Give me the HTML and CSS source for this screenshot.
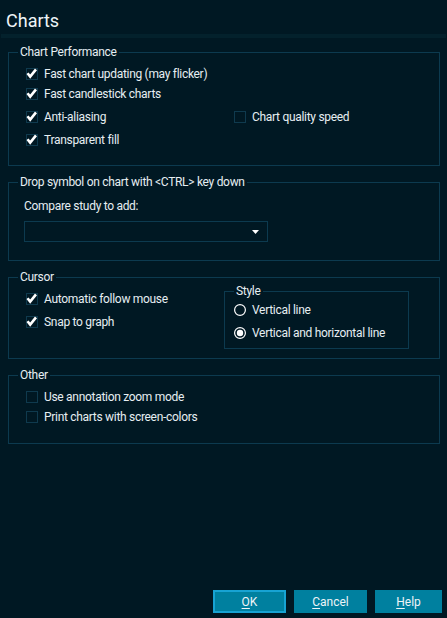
FILE: index.html
```html
<!DOCTYPE html>
<html>
<head>
<meta charset="utf-8">
<link rel="stylesheet" href="styles.css">
</head>
<body>
<div class="dialog">
  <header class="title">Charts</header>
  <div class="divider"></div>
  <main class="content">
    <fieldset class="group">
      <legend>Chart Performance</legend>
      <div class="perf-grid">
        <label class="opt span2"><svg class="box" viewBox="0 0 12 12"><rect x="0.5" y="0.5" width="11" height="11" fill="none" stroke="#0f3a4e"/><path d="M1.5 5.2 L4.2 8.6 L10 1.4" fill="none" stroke="#fff" stroke-width="2.6"/></svg>Fast chart updating (may flicker)</label>
        <label class="opt span2"><svg class="box" viewBox="0 0 12 12"><rect x="0.5" y="0.5" width="11" height="11" fill="none" stroke="#0f3a4e"/><path d="M1.5 5.2 L4.2 8.6 L10 1.4" fill="none" stroke="#fff" stroke-width="2.6"/></svg>Fast candlestick charts</label>
        <label class="opt"><svg class="box" viewBox="0 0 12 12"><rect x="0.5" y="0.5" width="11" height="11" fill="none" stroke="#0f3a4e"/><path d="M1.5 5.2 L4.2 8.6 L10 1.4" fill="none" stroke="#fff" stroke-width="2.6"/></svg>Anti-aliasing</label>
        <label class="opt"><svg class="box" viewBox="0 0 12 12"><rect x="0.5" y="0.5" width="11" height="11" fill="none" stroke="#0f3a4e"/></svg>Chart quality speed</label>
        <label class="opt span2"><svg class="box" viewBox="0 0 12 12"><rect x="0.5" y="0.5" width="11" height="11" fill="none" stroke="#0f3a4e"/><path d="M1.5 5.2 L4.2 8.6 L10 1.4" fill="none" stroke="#fff" stroke-width="2.6"/></svg>Transparent fill</label>
      </div>
    </fieldset>

    <fieldset class="group">
      <legend>Drop symbol on chart with &lt;CTRL&gt; key down</legend>
      <div class="drop-body">
        <div class="field-label">Compare study to add:</div>
        <div class="select"><svg class="arrow" viewBox="0 0 7 4"><path d="M0 0 H7 L3.5 4 Z" fill="#fff"/></svg></div>
      </div>
    </fieldset>

    <fieldset class="group">
      <legend>Cursor</legend>
      <div class="cursor-body">
        <div class="cursor-col">
          <label class="opt"><svg class="box" viewBox="0 0 12 12"><rect x="0.5" y="0.5" width="11" height="11" fill="none" stroke="#0f3a4e"/><path d="M1.5 5.2 L4.2 8.6 L10 1.4" fill="none" stroke="#fff" stroke-width="2.6"/></svg>Automatic follow mouse</label>
          <label class="opt gap"><svg class="box" viewBox="0 0 12 12"><rect x="0.5" y="0.5" width="11" height="11" fill="none" stroke="#0f3a4e"/><path d="M1.5 5.2 L4.2 8.6 L10 1.4" fill="none" stroke="#fff" stroke-width="2.6"/></svg>Snap to graph</label>
        </div>
        <fieldset class="group style-group">
          <legend>Style</legend>
          <div class="style-body">
            <label class="opt radio"><svg class="box" viewBox="0 0 12 12"><circle cx="6" cy="6" r="5.4" fill="none" stroke="#fff" stroke-width="1.2"/></svg>Vertical line</label>
            <label class="opt radio gap"><svg class="box" viewBox="0 0 12 12"><circle cx="6" cy="6" r="5.4" fill="none" stroke="#fff" stroke-width="1.2"/><circle cx="6" cy="6" r="3.2" fill="#fff"/></svg>Vertical and horizontal line</label>
          </div>
        </fieldset>
      </div>
    </fieldset>

    <fieldset class="group">
      <legend>Other</legend>
      <div class="other-body">
        <label class="opt"><svg class="box" viewBox="0 0 12 12"><rect x="0.5" y="0.5" width="11" height="11" fill="none" stroke="#0f3a4e"/></svg>Use annotation zoom mode</label>
        <label class="opt"><svg class="box" viewBox="0 0 12 12"><rect x="0.5" y="0.5" width="11" height="11" fill="none" stroke="#0f3a4e"/></svg>Print charts with screen-colors</label>
      </div>
    </fieldset>
  </main>
  <footer class="buttons">
    <button class="btn default"><u>O</u>K</button>
    <button class="btn"><u>C</u>ancel</button>
    <button class="btn help"><u>H</u>elp</button>
  </footer>
</div>
</body>
</html>
```

FILE: styles.css
```css
html, body {
  margin: 0;
  padding: 0;
  background: #001823;
}
body {
  font-family: Roboto, "Liberation Sans", sans-serif;
  font-size: 12px;
  letter-spacing: -0.3px;
  color: #e6eef2;
}
.dialog {
  height: 618px;
  display: flex;
  flex-direction: column;
}
.title {
  font-size: 18px;
  line-height: 21px;
  letter-spacing: 0;
  padding: 10px 6px 3px;
  color: #eef4f7;
}
.divider {
  height: 4px;
  margin: 0 1px;
  background: #03212c;
}
.content {
  padding: 0 7px 0 8px;
}
.group {
  margin: 9px 0 0;
  padding: 0;
  border: 1px solid #0c3a4f;
  min-width: 0;
}
.group:first-child {
  margin-top: 7px;
}
.group legend {
  margin-left: 9px;
  padding: 0 2px;
  line-height: 14px;
  height: 14px;
}
.opt {
  display: flex;
  align-items: center;
  height: 20px;
  line-height: 14px;
  white-space: nowrap;
}
.box {
  width: 12px;
  height: 12px;
  flex: none;
  margin-right: 6px;
}
.perf-grid {
  display: grid;
  grid-template-columns: 208px 1fr;
  grid-template-rows: 20px 20px 23px 23px;
  align-items: end;
  padding: 5px 0 15px 17px;
}
.span2 {
  grid-column: 1 / 3;
}
.drop-body {
  padding: 10px 0 18px 15px;
}
.field-label {
  line-height: 14px;
}
.select {
  margin-top: 8px;
  width: 242px;
  height: 19px;
  border: 1px solid #0c3a4f;
  display: flex;
  align-items: center;
  justify-content: flex-end;
}
.arrow {
  width: 7px;
  height: 4px;
  margin-right: 8px;
}
.cursor-body {
  display: flex;
  align-items: flex-start;
  padding: 0 0 9px 17px;
}
.cursor-col {
  width: 198px;
  margin-top: 5px;
}
.gap {
  margin-top: 3px;
}
.style-group {
  margin: 0;
  width: 183px;
}
.style-group legend {
  margin-left: 9px;
}
.style-body {
  padding: 2px 0 5px 9px;
}
.other-body {
  padding: 5px 0 16px 17px;
}
.buttons {
  margin-top: auto;
  display: flex;
  justify-content: flex-end;
  gap: 8px;
  padding: 0 5px 5px 0;
}
.btn {
  width: 73px;
  height: 23px;
  border: 2px solid #00809f;
  background: #00809f;
  color: #eef4f7;
  font-family: Roboto, "Liberation Sans", sans-serif;
  font-size: 12px;
  padding: 0;
}
.btn.default {
  border-color: #17a3d3;
}
.btn.help {
  width: 67px;
}
.btn u {
  text-underline-offset: 2px;
}
```
